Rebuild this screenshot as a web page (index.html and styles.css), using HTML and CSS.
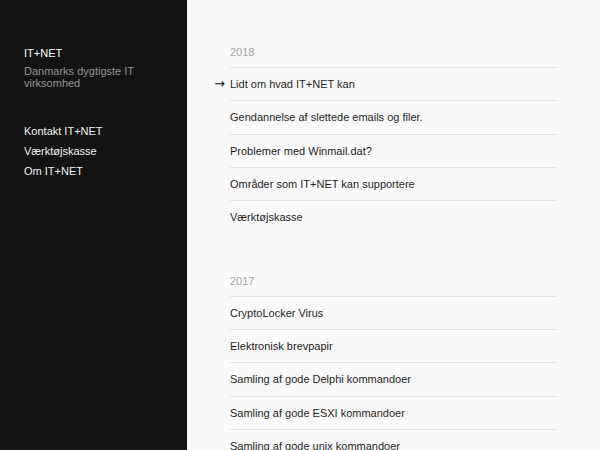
FILE: index.html
```html
<!DOCTYPE html>
<html lang="da">
<head>
<meta charset="utf-8">
<title>IT+NET</title>
<link rel="stylesheet" href="styles.css">
</head>
<body>
<div class="page">
  <aside class="sidebar">
    <div class="brand">
      <div class="brand-name">IT+NET</div>
      <div class="brand-tag">Danmarks dygtigste IT virksomhed</div>
    </div>
    <nav class="nav">
      <a href="#">Kontakt IT+NET</a>
      <a href="#">Værktøjskasse</a>
      <a href="#">Om IT+NET</a>
    </nav>
  </aside>
  <main class="main">
    <section class="year">
      <h2 class="year-title">2018</h2>
      <ul class="posts">
        <li class="current"><a href="#">Lidt om hvad IT+NET kan</a></li>
        <li><a href="#">Gendannelse af slettede emails og filer.</a></li>
        <li><a href="#">Problemer med Winmail.dat?</a></li>
        <li><a href="#">Områder som IT+NET kan supportere</a></li>
        <li><a href="#">Værktøjskasse</a></li>
      </ul>
    </section>
    <section class="year">
      <h2 class="year-title">2017</h2>
      <ul class="posts">
        <li><a href="#">CryptoLocker Virus</a></li>
        <li><a href="#">Elektronisk brevpapir</a></li>
        <li><a href="#">Samling af gode Delphi kommandoer</a></li>
        <li><a href="#">Samling af gode ESXI kommandoer</a></li>
        <li><a href="#">Samling af gode unix kommandoer</a></li>
      </ul>
    </section>
  </main>
</div>
</body>
</html>
```
FILE: styles.css
```css
html, body {
  margin: 0;
  padding: 0;
  height: 100%;
  overflow: hidden;
}
body {
  font-family: "Liberation Sans", Arial, sans-serif;
  font-size: 11px;
  background: #fafafa;
  color: #222;
}
a {
  color: inherit;
  text-decoration: none;
}
.page {
  display: flex;
  min-height: 100vh;
}
.sidebar {
  width: 187px;
  flex: none;
  background: #131313;
  box-sizing: border-box;
  padding: 46px 24px 0 24px;
  color: #f0f0f0;
}
.brand-name {
  line-height: 14px;
  color: #ffffff;
}
.brand-tag {
  color: #949494;
  line-height: 12px;
  margin-top: 5px;
  width: 120px;
}
.nav {
  display: flex;
  flex-direction: column;
  margin-top: 32px;
}
.nav a {
  line-height: 20px;
  color: #f2f2f2;
}
.main {
  flex: 1;
  padding: 46px 43px 0 43px;
}
.year + .year {
  margin-top: 41px;
}
.year-title {
  font-size: 11px;
  font-weight: normal;
  color: #a6a6a6;
  line-height: 13px;
  margin: 0;
  padding-bottom: 8px;
}
.posts {
  list-style: none;
  margin: 0;
  padding: 0;
}
.posts li {
  border-top: 1px solid #e4e4e4;
  padding: 10px 0;
  line-height: 12.33px;
  position: relative;
  color: #1e1e1e;
}
.posts li.current::before {
  content: "→";
  font-family: "DejaVu Sans", sans-serif;
  font-size: 13px;
  line-height: 12px;
  position: absolute;
  left: -16px;
  top: 10px;
  color: #111;
}
```
